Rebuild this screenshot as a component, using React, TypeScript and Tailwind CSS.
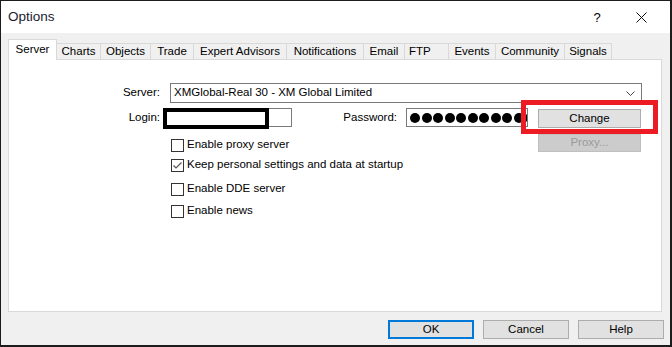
import React from "react";

const tabs: { label: string; w: number; left?: boolean }[] = [
  { label: "Charts", w: 44 },
  { label: "Objects", w: 50 },
  { label: "Trade", w: 43 },
  { label: "Expert Advisors", w: 93 },
  { label: "Notifications", w: 77 },
  { label: "Email", w: 41 },
  { label: "FTP", w: 44, left: true },
  { label: "Events", w: 47 },
  { label: "Community", w: 69 },
  { label: "Signals", w: 47 },
];

function CheckRow({ label, checked, mt }: { label: string; checked?: boolean; mt: string }) {
  return (
    <div className={`flex items-center h-[16px] ${mt}`}>
      <div className="w-[13px] h-[13px] border border-[#333333] bg-white flex items-center justify-center">
        {checked && (
          <svg width="11" height="11" viewBox="0 0 11 11">
            <polyline points="1.5,5.5 4,8 9.5,2.5" fill="none" stroke="#555555" strokeWidth="1.2" />
          </svg>
        )}
      </div>
      <span className="ml-[3px]">{label}</span>
    </div>
  );
}

export default function App() {
  return (
    <div
      className="w-[672px] h-[347px] bg-[#1c1c1c] relative overflow-hidden text-[11.5px] text-black leading-none"
      style={{ fontFamily: '"Liberation Sans", Arial, sans-serif' }}
    >
      <div className="ml-[1px] mt-[1px] w-[669px] h-[344px] bg-[#f0f0f0] flex flex-col">
        {/* Title bar */}
        <div className="h-[32px] bg-white flex items-center shrink-0">
          <span className="pl-[7px] text-[13.5px] text-[#1a1a2e]">Options</span>
          <div className="ml-auto flex items-center pr-[14px]">
            <div className="w-[30px] h-[30px] flex items-center justify-center text-[13px]">?</div>
            <div className="ml-[14px] w-[30px] h-[30px] flex items-center justify-center">
              <svg width="11" height="11" viewBox="0 0 11 11">
                <path d="M0.5 0.5 L10.5 10.5 M10.5 0.5 L0.5 10.5" stroke="#111" strokeWidth="1" fill="none" />
              </svg>
            </div>
          </div>
        </div>

        {/* Body */}
        <div className="flex-1 flex flex-col pl-[7px]">
          {/* Tabs */}
          <div className="mt-[6px] h-[20px] flex items-end">
            <div className="relative z-10 h-[21px] mb-[-1px] w-[49px] bg-white border border-b-0 border-[#d9d9d9] flex items-start justify-center pt-[4px]">
              Server
            </div>
            {tabs.map((t) => (
              <div
                key={t.label}
                className={`h-[16px] bg-[#f0f0f0] border border-l-0 border-b-0 border-[#d9d9d9] flex items-center ${
                  t.left ? "justify-start pl-[4px]" : "justify-center"
                }`}
                style={{ width: t.w }}
              >
                {t.label}
              </div>
            ))}
          </div>

          {/* Panel */}
          <div className="w-[654px] h-[253px] border border-[#d9d9d9] bg-white flex flex-col shrink-0">
            {/* Server row */}
            <div className="mt-[23px] flex items-center h-[20px]">
              <div className="w-[151px] text-right">Server:</div>
              <div className="ml-[10px] w-[472px] h-[20px] border border-[#7a7a7a] bg-white flex items-center pl-[3px]">
                <span>XMGlobal-Real 30 - XM Global Limited</span>
                <svg className="ml-auto mr-[6px]" width="9" height="5" viewBox="0 0 9 5">
                  <polyline points="0.5,0.5 4.5,4.5 8.5,0.5" fill="none" stroke="#444" strokeWidth="1" />
                </svg>
              </div>
            </div>

            {/* Login / Password row */}
            <div className="mt-[5px] flex items-start h-[21px]">
              <div className="w-[151px] h-[19px] flex items-center justify-end">Login:</div>
              <div className="ml-[3px] w-[129px] h-[19px] border border-[#7a7a7a] bg-white relative">
                <div className="absolute left-[-1px] top-[-1px] w-[106px] h-[21px] border-4 border-black bg-white" />
              </div>
              <div className="w-[105px] h-[19px] flex items-center justify-end">Password:</div>
              <div className="ml-[9px] w-[122px] h-[19px] border border-[#7a7a7a] bg-white overflow-hidden flex items-center pl-[3px] gap-[1.5px]">
                {Array.from({ length: 11 }).map((_, i) => (
                  <div key={i} className="w-[10px] h-[10px] rounded-full bg-black shrink-0" />
                ))}
              </div>
              <div className="ml-[10px] mt-[1px] w-[103px] h-[19px] bg-[#e1e1e1] border border-[#adadad] flex items-center justify-center">
                Change
              </div>
            </div>

            {/* Checkboxes + Proxy */}
            <div className="flex items-start">
              <div className="ml-[162px] w-[367px] flex flex-col">
                <CheckRow label="Enable proxy server" mt="mt-[8px]" />
                <CheckRow label="Keep personal settings and data at startup" checked mt="mt-[4px]" />
                <CheckRow label="Enable DDE server" mt="mt-[8px]" />
                <CheckRow label="Enable news" mt="mt-[6px]" />
              </div>
              <div className="mt-[5px] w-[103px] h-[18px] bg-[#cccccc] border border-[#bfbfbf] flex items-center justify-center text-[#9a9a9a]">
                Proxy...
              </div>
            </div>
          </div>

          {/* Bottom buttons */}
          <div className="mt-[8px] flex justify-end gap-[9px] pr-[6px]">
            <div className="w-[86px] h-[19px] bg-[#e1e1e1] border-2 border-[#0078d7] flex items-center justify-center">
              OK
            </div>
            <div className="w-[86px] h-[19px] bg-[#e1e1e1] border border-[#adadad] flex items-center justify-center">
              Cancel
            </div>
            <div className="w-[86px] h-[19px] bg-[#e1e1e1] border border-[#adadad] flex items-center justify-center">
              Help
            </div>
          </div>
        </div>
      </div>

      {/* Red highlight box */}
      <div className="absolute left-[521px] top-[100px] w-[137px] h-[34px] border-[5px] border-[#ed1c24]" />
    </div>
  );
}
